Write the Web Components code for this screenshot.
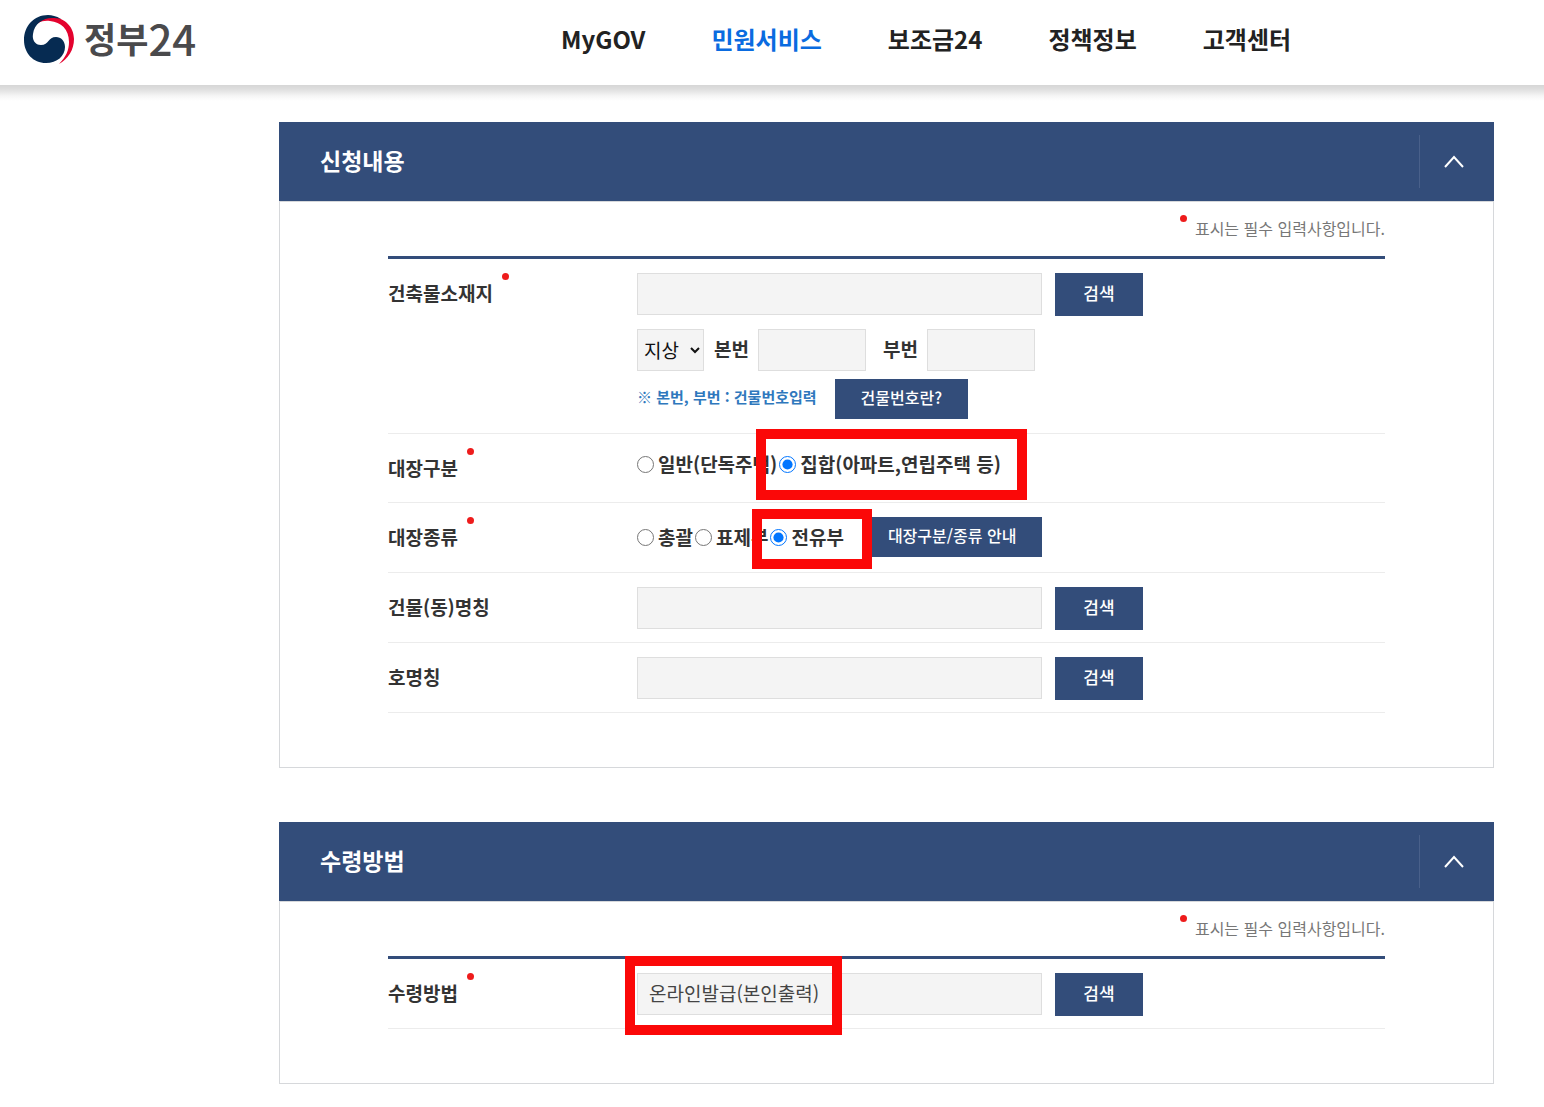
<!DOCTYPE html>
<html lang="ko">
<head>
<meta charset="utf-8">
<meta name="viewport" content="width=device-width, initial-scale=1">
<title>정부24</title>
<style>
  body { margin: 0; background: #fff; color: #333; font-family: "Noto Sans CJK KR", "Noto Sans", sans-serif; font-size: 19px; line-height: 28px; }
</style>
</head>
<body>
<gov-header></gov-header>
<gov-form></gov-form>

<script>
const define = (name, html) => customElements.define(name, class extends HTMLElement {
  constructor() {
    super();
    const t = document.createElement('template');
    t.innerHTML = html;
    this.attachShadow({ mode: 'open' }).append(t.content.cloneNode(true));
  }
});

define('gov-logo', `
  <style>
    :host { display: block; }
    a { display: flex; align-items: center; gap: 9px; color: #4a4a4c; text-decoration: none; line-height: 44px; }
    svg { display: block; width: 52px; height: 50px; }
    .name { display: flex; align-items: center; padding-bottom: 4px; }
    .ko { font-size: 35px; font-weight: 700; }
    .num { font-size: 42px; font-weight: 500; }
  </style>
  <a href="#" aria-label="정부24">
    <svg viewBox="0 0 52 50" aria-hidden="true">
      <path fill="#e4032e" d="M9 14C13 5 21 1 30 2C42 3 51 12 51 24C51 35 45 44 36 49C43 42 46 35 46 27C46 14 38 7 27 6C19 5 13 8 9 14Z"/>
      <path fill="#062b52" d="M38 4C33 1 29 0 25 0C11 0 1 11 1 25C1 38 10 48 23 48C34 48 42 41 42 32C42 26 38 22 33 22C25 22 26 30 18 30C12 30 9 25 10 19C11 9 20 3 29 3C32 3 35 3 38 4Z"/>
    </svg>
    <span class="name"><span class="ko">정부</span><span class="num">24</span></span>
  </a>`);

define('gov-header', `
  <style>
    :host { display: block; background: #fff; }
    header { display: flex; align-items: center; height: 85px; padding-bottom: 6px; box-sizing: border-box; }
    gov-logo { flex: 0 0 308px; padding-left: 23px; box-sizing: border-box; }
    nav { flex: 1; display: flex; justify-content: center; gap: 66px; padding-bottom: 2px; }
    a { color: #222; font-size: 24px; font-weight: 700; line-height: 36px; text-decoration: none; white-space: nowrap; }
    a[aria-current] { color: #0a6be0; }
    .shade { height: 16px; background: linear-gradient(#d6d6d6, #dedede 25%, #f6f6f6 70%, #fff); }
  </style>
  <header>
    <gov-logo></gov-logo>
    <nav>
      <a href="#">MyGOV</a>
      <a href="#" aria-current="page">민원서비스</a>
      <a href="#">보조금24</a>
      <a href="#">정책정보</a>
      <a href="#">고객센터</a>
    </nav>
  </header>
  <div class="shade"></div>`);

define('gov-card', `
  <style>
    :host { display: block; }
    .head { display: flex; align-items: center; justify-content: space-between; height: 79px; padding-left: 41px; background: #334d7a; color: #fff; }
    ::slotted(h2) { margin: 0; padding-bottom: 3px; font-size: 23px; line-height: 34px; font-weight: 700; }
    button { width: 75px; height: 53px; padding: 0 6px 0 0; border: 0; border-left: 1px solid #49608a; background: none; color: #fff; display: flex; align-items: center; justify-content: center; }
    .body { border: 1px solid #d6d8db; padding: 0 108px 54px; }
    .note { display: flex; justify-content: flex-end; gap: 8px; margin: 0; padding: 13px 0 14px; font-size: 16px; line-height: 27px; color: #777; border-bottom: 3px solid #334d7a; }
    .note i { width: 7px; height: 7px; border-radius: 50%; background: #ee1c1c; }
  </style>
  <section>
    <div class="head">
      <slot name="title"></slot>
      <button type="button" aria-label="접기"><svg width="20" height="13" viewBox="0 0 20 13" fill="none" stroke="currentColor" stroke-width="2" aria-hidden="true"><path d="M1 12L10 2L19 12"/></svg></button>
    </div>
    <div class="body">
      <p class="note"><i></i>표시는 필수 입력사항입니다.</p>
      <slot></slot>
    </div>
  </section>`);

define('form-row', `
  <style>
    :host { display: flex; min-height: 69px; box-sizing: border-box; padding: 14px 0 12px; border-bottom: 1px solid #ececec; }
    .label { flex: 0 0 249px; display: flex; align-items: flex-start; gap: 9px; font-weight: 700; line-height: 40px; }
    i { display: none; width: 7px; height: 7px; border-radius: 50%; background: #ee1c1c; }
    :host([required]) i { display: block; }
    .field { flex: 1; min-width: 0; position: relative; }
  </style>
  <div class="label"><slot name="label"></slot><i></i></div>
  <div class="field"><slot></slot></div>`);

/* Red frame that marks the option to pick; floats over the row it sits in. */
define('mark-frame', `
  <style>
    :host { position: absolute; z-index: 1; box-sizing: border-box; border: 10px solid #fb0808; pointer-events: none;
      left: var(--x); top: var(--y); width: var(--w); height: var(--h); }
  </style>`);

define('gov-form', `
  <style>
    :host { display: block; }
    form { display: flex; flex-direction: column; gap: 54px; padding: 21px 50px 22px 279px; }
    .line { display: flex; align-items: center; }
    .line > * { flex: none; }
    input, select, button { font: inherit; box-sizing: border-box; margin: 0; border-radius: 0; }
    input:not([type]), select { height: 42px; border: 1px solid #dedede; background: #f4f4f4; color: #444; }
    input:not([type]) { padding: 0 11px 3px; }
    .wide { width: 405px; }
    .short { width: 108px; }
    select { width: 67px; color: #111; padding: 0 0 2px 2px; }
    .find, .help { border: 0; background: #334d7a; color: #fff; font-weight: 500; }
    .find { width: 88px; height: 43px; padding: 0 0 3px; font-size: 17px; }
    .help { height: 40px; padding: 0 26px 4px; font-size: 16px; }
    .search { gap: 13px; height: 43px; align-items: flex-start; }
    .lot { height: 42px; margin: 13px 0 8px; }
    .lot label { font-weight: 700; padding: 0 9px 2px 10px; }
    .lot .short + label { padding-left: 17px; }
    .hint { gap: 18px; margin-bottom: 2px; }
    .hint span { color: #2f78bd; font-size: 15px; font-weight: 700; padding-bottom: 4px; }
    .radios { gap: 2px; height: 32px; }
    .radios.tall { height: 40px; margin-bottom: 3px; }
    .radios label { display: flex; align-items: center; gap: 4px; font-weight: 700; }
    .radios .help { margin-left: 16px; }
    input[type=radio] { width: 17px; height: 17px; }
  </style>
  <form>
    <gov-card>
      <h2 slot="title">신청내용</h2>
      <form-row required>
        <label slot="label" for="addr">건축물소재지</label>
        <div class="line search"><input id="addr" class="wide" readonly><button class="find" type="button">검색</button></div>
        <div class="line lot">
          <select aria-label="대지 구분"><option>지상</option></select>
          <label for="main-no">본번</label><input id="main-no" class="short">
          <label for="sub-no">부번</label><input id="sub-no" class="short">
        </div>
        <div class="line hint"><span>※ 본번, 부번 : 건물번호입력</span><button class="help" type="button">건물번호란?</button></div>
      </form-row>
      <form-row required>
        <span slot="label" id="ledger">대장구분</span>
        <div class="line radios" role="radiogroup" aria-labelledby="ledger">
          <label><input type="radio" name="ledger">일반(단독주택)</label>
          <label><input type="radio" name="ledger" checked>집합(아파트,연립주택 등)</label>
        </div>
        <mark-frame style="--x:119px;--y:-19px;--w:271px;--h:71px"></mark-frame>
      </form-row>
      <form-row required>
        <span slot="label" id="kind">대장종류</span>
        <div class="line radios tall" role="radiogroup" aria-labelledby="kind">
          <label><input type="radio" name="kind">총괄</label>
          <label><input type="radio" name="kind">표제부</label>
          <label><input type="radio" name="kind" checked>전유부</label>
          <button class="help" type="button">대장구분/종류 안내</button>
        </div>
        <mark-frame style="--x:115px;--y:-8px;--w:120px;--h:60px"></mark-frame>
      </form-row>
      <form-row>
        <label slot="label" for="bldg">건물(동)명칭</label>
        <div class="line search"><input id="bldg" class="wide" readonly><button class="find" type="button">검색</button></div>
      </form-row>
      <form-row>
        <label slot="label" for="unit">호명칭</label>
        <div class="line search"><input id="unit" class="wide" readonly><button class="find" type="button">검색</button></div>
      </form-row>
    </gov-card>
    <gov-card>
      <h2 slot="title">수령방법</h2>
      <form-row required>
        <label slot="label" for="receive">수령방법</label>
        <div class="line search"><input id="receive" class="wide" value="온라인발급(본인출력)" readonly><button class="find" type="button">검색</button></div>
        <mark-frame style="--x:-12px;--y:-17px;--w:217px;--h:79px"></mark-frame>
      </form-row>
    </gov-card>
  </form>`);
</script>
</body>
</html>
